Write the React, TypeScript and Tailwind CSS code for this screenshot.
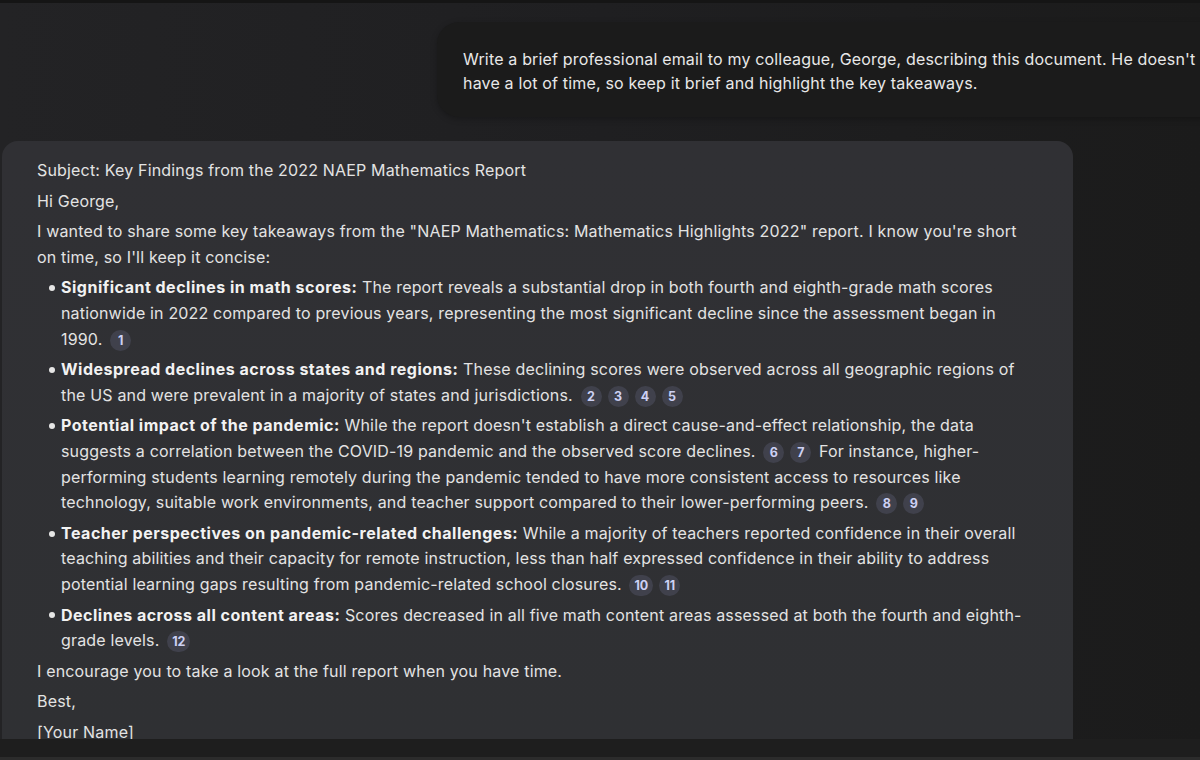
import React from "react";

function Cite({ n }: { n: number }) {
  return (
    <span className="mx-[3px] inline-block h-[21px] min-w-[21px] rounded-full bg-[#40414c] px-[5px] text-center align-middle text-[12.5px] font-bold leading-[21px] tracking-normal text-[#cdd1f4]">
      {n}
    </span>
  );
}

function Bullet({ children }: { children: React.ReactNode }) {
  return (
    <li className="flex">
      <span className="flex h-[25.6px] w-[24px] shrink-0 items-center">
        <span className="ml-[12px] h-[6px] w-[6px] rounded-full bg-[#e6e6e6]" />
      </span>
      <span className="whitespace-nowrap">{children}</span>
    </li>
  );
}

function B({ children }: { children: React.ReactNode }) {
  return <b className="font-bold tracking-[0.5px] text-[#f2f2f2]">{children}</b>;
}

export default function App() {
  return (
    <div
      className="flex h-[760px] w-[1200px] flex-col overflow-hidden bg-gradient-to-r from-[#232325] via-[#1f1f21] to-[#1b1b1b] text-[16px] tracking-[0.17px] text-[#e3e3e3]"
      style={{ fontFamily: "Inter, Roboto, sans-serif" }}
    >
      <div className="h-[3px] shrink-0 bg-[#151515]" />
      <main className="min-h-0 flex-1 overflow-hidden">
        <div className="flex pt-[19px]">
          <div className="ml-[437px] w-[800px] shrink-0 rounded-[22px] bg-[#1b1b1b] pb-[22px] pl-[26px] pt-[25px] leading-[24px] text-[#e8e8e8] shadow-[0_2px_6px_rgba(0,0,0,0.25)]">
            <p className="whitespace-nowrap">
              Write a brief professional email to my colleague, George, describing this document. He doesn't
              <br />
              have a lot of time, so keep it brief and highlight the key takeaways.
            </p>
          </div>
        </div>
        <div className="ml-[2px] mt-[24px] w-[1071px] rounded-t-[16px] bg-gradient-to-b from-[#303034] to-[#2f3033] pl-[35px] pt-[17px] leading-[25.6px]">
          <div className="flex flex-col gap-[5px]">
            <p>Subject: Key Findings from the 2022 NAEP Mathematics Report</p>
            <p>Hi George,</p>
            <p className="whitespace-nowrap">
              I wanted to share some key takeaways from the "NAEP Mathematics: Mathematics Highlights 2022" report. I know you're short
              <br />
              on time, so I'll keep it concise:
            </p>
            <ul className="flex flex-col gap-[5px]">
              <Bullet>
                <B>Significant declines in math scores:</B> The report reveals a substantial drop in both fourth and eighth-grade math scores
                <br />
                nationwide in 2022 compared to previous years, representing the most significant decline since the assessment began in
                <br />
                1990. <Cite n={1} />
              </Bullet>
              <Bullet>
                <B>Widespread declines across states and regions:</B> These declining scores were observed across all geographic regions of
                <br />
                the US and were prevalent in a majority of states and jurisdictions. <Cite n={2} />
                <Cite n={3} />
                <Cite n={4} />
                <Cite n={5} />
              </Bullet>
              <Bullet>
                <B>Potential impact of the pandemic:</B> While the report doesn't establish a direct cause-and-effect relationship, the data
                <br />
                suggests a correlation between the COVID-19 pandemic and the observed score declines. <Cite n={6} />
                <Cite n={7} /> For instance, higher-
                <br />
                performing students learning remotely during the pandemic tended to have more consistent access to resources like
                <br />
                technology, suitable work environments, and teacher support compared to their lower-performing peers. <Cite n={8} />
                <Cite n={9} />
              </Bullet>
              <Bullet>
                <B>Teacher perspectives on pandemic-related challenges:</B> While a majority of teachers reported confidence in their overall
                <br />
                teaching abilities and their capacity for remote instruction, less than half expressed confidence in their ability to address
                <br />
                potential learning gaps resulting from pandemic-related school closures. <Cite n={10} />
                <Cite n={11} />
              </Bullet>
              <Bullet>
                <B>Declines across all content areas:</B> Scores decreased in all five math content areas assessed at both the fourth and eighth-
                <br />
                grade levels. <Cite n={12} />
              </Bullet>
            </ul>
            <p>I encourage you to take a look at the full report when you have time.</p>
            <p>Best,</p>
            <p>[Your Name]</p>
          </div>
        </div>
      </main>
      <div className="h-[18px] shrink-0 bg-[#1e1e1e]" />
      <div className="h-[3px] shrink-0 bg-[#2c2c2c]" />
    </div>
  );
}
